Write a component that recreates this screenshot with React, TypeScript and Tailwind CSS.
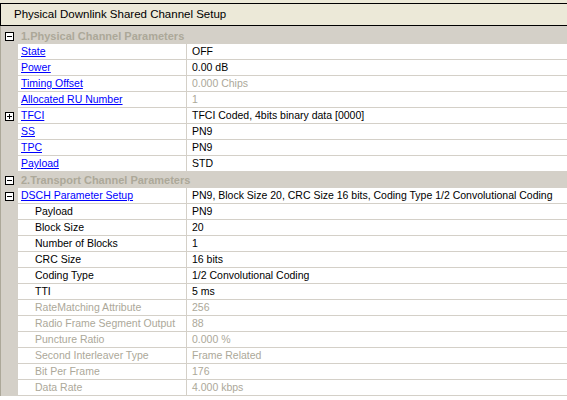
import React from "react";

type Row = {
  name: string;
  value: string;
  link?: boolean;
  sub?: boolean;
  dim?: boolean;
  box?: "plus" | "minus";
};

type Section = { title: string; rows: Row[] };

const SECTIONS: Section[] = [
  {
    title: "1.Physical Channel Parameters",
    rows: [
      { name: "State", value: "OFF", link: true },
      { name: "Power", value: "0.00 dB", link: true },
      { name: "Timing Offset", value: "0.000 Chips", link: true, dim: true },
      { name: "Allocated RU Number", value: "1", link: true, dim: true },
      { name: "TFCI", value: "TFCI Coded, 4bits binary data [0000]", link: true, box: "plus" },
      { name: "SS", value: "PN9", link: true },
      { name: "TPC", value: "PN9", link: true },
      { name: "Payload", value: "STD", link: true },
    ],
  },
  {
    title: "2.Transport Channel Parameters",
    rows: [
      {
        name: "DSCH Parameter Setup",
        value: "PN9, Block Size 20, CRC Size 16 bits, Coding Type 1/2 Convolutional Coding",
        link: true,
        box: "minus",
      },
      { name: "Payload", value: "PN9", sub: true },
      { name: "Block Size", value: "20", sub: true },
      { name: "Number of Blocks", value: "1", sub: true },
      { name: "CRC Size", value: "16 bits", sub: true },
      { name: "Coding Type", value: "1/2 Convolutional Coding", sub: true },
      { name: "TTI", value: "5 ms", sub: true },
      { name: "RateMatching Attribute", value: "256", sub: true, dim: true },
      { name: "Radio Frame Segment Output", value: "88", sub: true, dim: true },
      { name: "Puncture Ratio", value: "0.000 %", sub: true, dim: true },
      { name: "Second Interleaver Type", value: "Frame Related", sub: true, dim: true },
      { name: "Bit Per Frame", value: "176", sub: true, dim: true },
      { name: "Data Rate", value: "4.000 kbps", sub: true, dim: true },
    ],
  },
];

function ToggleBox({ kind }: { kind: "plus" | "minus" }) {
  return (
    <div className="relative h-[9px] w-[9px] border border-black bg-white">
      <div className="absolute left-[1px] top-[3px] h-[1px] w-[5px] bg-black" />
      {kind === "plus" && <div className="absolute left-[3px] top-[1px] h-[5px] w-[1px] bg-black" />}
    </div>
  );
}

function CategoryRow({ title }: { title: string }) {
  return (
    <div className="flex h-[16px] items-center bg-[#D4D0C8]">
      <div className="flex w-[17px] shrink-0 items-center justify-center pr-[1px]">
        <ToggleBox kind="minus" />
      </div>
      <span className="pl-[3px] text-[11px] font-bold text-[#ACA899]">{title}</span>
    </div>
  );
}

function PropRow({ row }: { row: Row }) {
  return (
    <div className="flex h-[16px]">
      <div className="flex w-[17px] shrink-0 items-center justify-center bg-[#D4D0C8] pr-[1px]">
        {row.box && <ToggleBox kind={row.box} />}
      </div>
      <div className="flex min-w-0 flex-1 border-b border-[#D4D0C8] bg-white">
        <div
          className={`flex w-[169px] shrink-0 items-center border-r border-[#D4D0C8] ${row.sub ? "pl-[17px]" : "pl-[3px]"}`}
        >
          <span
            className={`whitespace-nowrap text-[10.5px] ${
              row.link ? "text-[#0000FF] underline" : row.dim ? "text-[#ACA899]" : "text-black"
            }`}
          >
            {row.name}
          </span>
        </div>
        <div className="flex min-w-0 flex-1 items-center pl-[5px]">
          <span className={`whitespace-nowrap text-[10.5px] ${row.dim ? "text-[#ACA899]" : "text-black"}`}>
            {row.value}
          </span>
        </div>
      </div>
    </div>
  );
}

export default function App() {
  return (
    <div
      className="h-[400px] w-[567px] overflow-hidden bg-white leading-none"
      style={{ fontFamily: '"Liberation Sans", Arial, sans-serif' }}
    >
      <div className="bg-[#ECE9D8] pt-[3px]">
        <div className="flex h-[23px] items-center border-y border-l border-black pl-[13px] text-[11.5px] text-black">
          Physical Downlink Shared Channel Setup
        </div>
      </div>
      <div className="border-l border-[#ACA899]">
        <div className="h-[2px] bg-[#D4D0C8]" />
        {SECTIONS.map((s) => (
          <div key={s.title}>
            <CategoryRow title={s.title} />
            {s.rows.map((r) => (
              <PropRow key={s.title + r.name} row={r} />
            ))}
          </div>
        ))}
      </div>
    </div>
  );
}
